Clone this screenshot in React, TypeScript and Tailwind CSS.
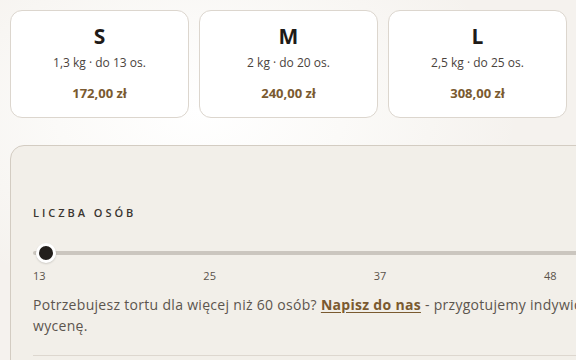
const sizes = [
  { name: "S", info: "1,3 kg · do 13 os.", price: "172,00 zł" },
  { name: "M", info: "2 kg · do 20 os.", price: "240,00 zł" },
  { name: "L", info: "2,5 kg · do 25 os.", price: "308,00 zł" },
  { name: "XL", info: "3 kg · do 30 os.", price: "376,00 zł" },
];

const ticks = [13, 25, 37, 48, 60];

export default function App() {
  return (
    <div className="min-h-screen overflow-hidden bg-[#f5f2ee] bg-[radial-gradient(ellipse_320px_200px_at_200px_110px,#ffffff_0%,#fbfaf8_45%,transparent_100%)] px-[10px] pt-[10px] font-['Open_Sans',sans-serif] text-[#1f1b18]">
      <div className="grid w-max grid-cols-[repeat(4,179px)] gap-[10px]">
        {sizes.map((s) => (
          <button
            key={s.name}
            type="button"
            className="flex h-[108px] flex-col items-center rounded-[12px] border border-[#dcd6ce] bg-white pt-[11px] text-center"
          >
            <span className="text-[21px] font-bold leading-[28px] text-[#1f1b18]">{s.name}</span>
            <span className="mt-[4px] text-[12px] leading-[18px] text-[#4a433d]">{s.info}</span>
            <span className="mt-[11px] text-[13px] font-bold leading-[20px] text-[#7a5a30]">{s.price}</span>
          </button>
        ))}
      </div>

      <section className="mt-[27px] w-[740px] rounded-[14px] border border-[#d3ccc2] bg-[#f2efe9] px-[22px] pt-[59px] pb-6">
        <h3 className="text-[11px] font-semibold uppercase leading-[16px] tracking-[0.27em] text-[#3a3530]">
          Liczba osób
        </h3>

        <div className="relative mt-[22px] h-[20px]">
          <div className="absolute left-0 right-0 top-[8px] h-[4px] rounded-full bg-[#cbc6bf]" />
          <div className="absolute left-[3px] top-0 h-[20px] w-[20px] rounded-full border-[3px] border-white bg-[#231f1c] shadow-[0_1px_2px_rgba(0,0,0,0.15)]" />
        </div>

        <div className="mt-[5px] flex justify-between text-[11px] leading-[16px] text-[#5a524a]">
          {ticks.map((t) => (
            <span key={t}>{t}</span>
          ))}
        </div>

        <p className="mt-[10px] max-w-[630px] text-[14px] leading-[21px] tracking-[0.3px] text-[#5c554e]">
          Potrzebujesz tortu dla więcej niż 60 osób?{" "}
          <a href="#" className="font-bold text-[#7a5a30] underline underline-offset-2">
            Napisz do nas
          </a>{" "}
          - przygotujemy indywidualną wycenę.
        </p>

        <div className="mt-[19px] h-px bg-[#ddd7cf]" />
      </section>
    </div>
  );
}
